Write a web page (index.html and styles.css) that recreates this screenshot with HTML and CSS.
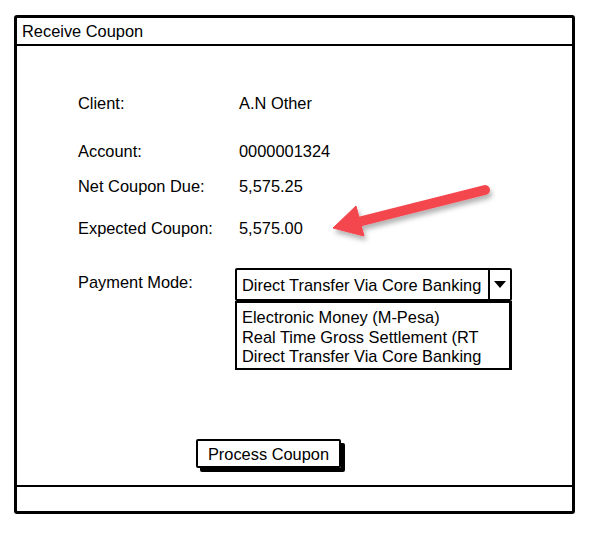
FILE: index.html
```html
<!DOCTYPE html>
<html>
<head>
<meta charset="utf-8">
<link rel="stylesheet" href="styles.css">
</head>
<body>
<div class="frame">
  <div class="titlebar">Receive Coupon</div>
  <div class="content">
    <div class="form">
      <div class="label r1">Client:</div><div class="value r1">A.N Other</div>
      <div class="label r2">Account:</div><div class="value r2">0000001324</div>
      <div class="label r3">Net Coupon Due:</div><div class="value r3">5,575.25</div>
      <div class="label r4">Expected Coupon:</div><div class="value r4">5,575.00</div>
      <div class="label r5">Payment Mode:</div>
      <div class="combo r5">
        <div class="combo-head">
          <div class="combo-text">Direct Transfer Via Core Banking</div>
          <div class="combo-btn"><span class="tri"></span></div>
        </div>
        <div class="combo-list">
          <div class="opt">Electronic Money (M-Pesa)</div>
          <div class="opt">Real Time Gross Settlement (RT</div>
          <div class="opt">Direct Transfer Via Core Banking</div>
        </div>
      </div>
    </div>
    <div class="actions">
      <div class="button">Process Coupon</div>
    </div>
  </div>
  <div class="footer"></div>
</div>
<svg class="callout" width="594" height="534" viewBox="0 0 594 534">
  <defs>
    <filter id="sh" x="-20%" y="-20%" width="140%" height="160%">
      <feDropShadow dx="2" dy="4" stdDeviation="2.5" flood-color="#000" flood-opacity="0.3"/>
    </filter>
  </defs>
  <g filter="url(#sh)" fill="#f4464d" stroke="#f4464d">
    <line x1="485" y1="190" x2="358" y2="222" stroke-width="10" stroke-linecap="round"/>
    <polygon points="333,228 356,206 364,236" stroke-width="1" stroke-linejoin="round"/>
  </g>
</svg>
</body>
</html>
```
FILE: styles.css
```css
html, body {
  margin: 0;
  padding: 0;
  background: #fff;
}
body {
  position: relative;
  width: 594px;
  height: 534px;
  font-family: "Liberation Sans", Arial, sans-serif;
  font-size: 16.4px;
  color: #000;
}
.frame {
  margin-left: 14px;
  margin-top: 15px;
  display: inline-flex;
  flex-direction: column;
  width: 561px;
  height: 499px;
  box-sizing: border-box;
  border: 3px solid #000;
  border-radius: 3px;
  vertical-align: top;
}
.titlebar {
  height: 26px;
  line-height: 27px;
  padding-left: 5px;
  border-bottom: 2px solid #000;
}
.content {
  flex: 1;
  padding: 47px 0 0 61px;
}
.form {
  display: grid;
  grid-template-columns: 161px auto;
  align-items: start;
  line-height: 20px;
}
.r2 { margin-top: 28px; }
.r3 { margin-top: 15px; }
.r4 { margin-top: 22px; }
.label.r5 { margin-top: 34px; }
.combo.r5 {
  margin-top: 30px;
  margin-left: -4px;
  width: 277px;
}
.combo-head {
  display: flex;
  height: 33px;
  box-sizing: border-box;
  border: 2px solid #000;
  border-radius: 2px;
}
.combo-text {
  flex: 1;
  padding-left: 5px;
  line-height: 30px;
  border-right: 2px solid #000;
  white-space: nowrap;
  overflow: hidden;
}
.combo-btn {
  width: 20px;
  display: flex;
  align-items: center;
  justify-content: center;
}
.tri {
  width: 0;
  height: 0;
  border-left: 6px solid transparent;
  border-right: 6px solid transparent;
  border-top: 7px solid #000;
}
.combo-list {
  border: 2px solid #000;
  border-right-width: 3px;
  padding: 5px 0 1px 5px;
  line-height: 19.5px;
  white-space: nowrap;
  overflow: hidden;
}
.actions {
  margin-top: 69px;
  padding-left: 118px;
}
.button {
  display: inline-block;
  width: 145px;
  height: 29px;
  box-sizing: border-box;
  border: 2px solid #000;
  border-radius: 2px;
  box-shadow: 4px 4px 0 #000;
  text-align: center;
  line-height: 26px;
}
.footer {
  height: 24px;
  border-top: 2px solid #000;
}
.callout {
  position: absolute;
  left: 0;
  top: 0;
  pointer-events: none;
}
```
